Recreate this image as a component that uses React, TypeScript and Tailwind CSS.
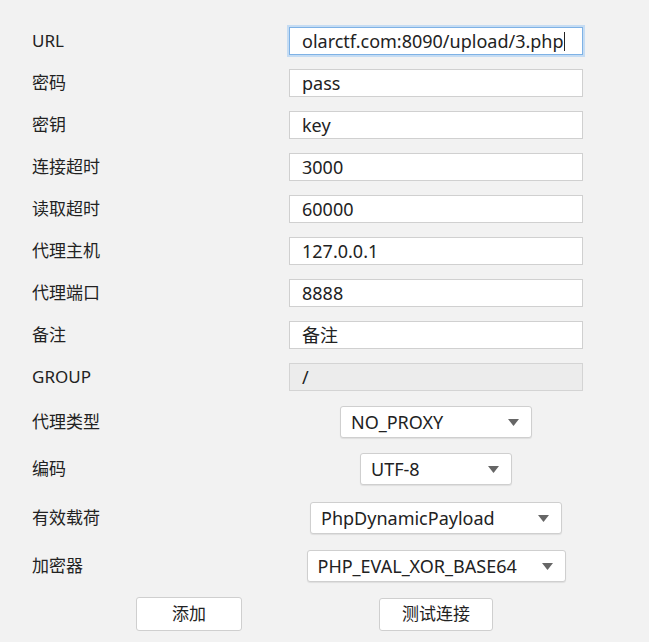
import React from "react";

const font = { fontFamily: '"Noto Sans", "Noto Sans CJK SC", sans-serif' };

const TextRow = ({ label, value, focused, disabled }: { label: string; value: string; focused?: boolean; disabled?: boolean }) => (
  <div className="flex items-center h-[28px]">
    <div className="w-[257px] text-[17px] text-[#222]">{label}</div>
    <div
      className={`w-[294px] h-[28px] flex items-center pl-[12px] text-[17px] text-[#222] border ${
        focused
          ? "border-[#7fb2e5] ring-2 ring-[#c5dcf3] bg-white"
          : disabled
          ? "border-[#d4d4d4] bg-[#ececec]"
          : "border-[#d0d0d0] bg-white"
      }`}
    >
      <span className="text-[18px]">{value}</span>
      {focused && <span className="w-px h-[19px] bg-[#222]" />}
    </div>
  </div>
);

const SelectRow = ({ label, value, width }: { label: string; value: string; width: string }) => (
  <div className="flex items-center h-[32px]">
    <div className="w-[257px] text-[17px] text-[#222]">{label}</div>
    <div className="w-[294px] flex justify-center">
      <div
        className={`${width} h-[32px] flex items-center justify-between pl-[10px] pr-[12px] bg-white border border-[#cfcfcf] rounded-[3px] shadow-[0_1px_1px_rgba(0,0,0,0.08)] text-[18px] text-[#222]`}
      >
        <span>{value}</span>
        <svg width="11" height="7" viewBox="0 0 11 7">
          <path d="M0 0 L11 0 L5.5 7 Z" fill="#666" />
        </svg>
      </div>
    </div>
  </div>
);

export default function App() {
  return (
    <div className="w-[649px] h-[642px] bg-[#f2f2f2] pl-[32px] pt-[27px]" style={font}>
      <div className="flex flex-col gap-[14px]">
        <TextRow label="URL" value="olarctf.com:8090/upload/3.php" focused />
        <TextRow label="密码" value="pass" />
        <TextRow label="密钥" value="key" />
        <TextRow label="连接超时" value="3000" />
        <TextRow label="读取超时" value="60000" />
        <TextRow label="代理主机" value="127.0.0.1" />
        <TextRow label="代理端口" value="8888" />
        <TextRow label="备注" value="备注" />
        <TextRow label="GROUP" value="/" disabled />
      </div>
      <div className="mt-[15px] flex flex-col">
        <SelectRow label="代理类型" value="NO_PROXY" width="w-[192px]" />
        <div className="mt-[15px]">
          <SelectRow label="编码" value="UTF-8" width="w-[152px]" />
        </div>
        <div className="mt-[17px]">
          <SelectRow label="有效载荷" value="PhpDynamicPayload" width="w-[252px]" />
        </div>
        <div className="mt-[16px]">
          <SelectRow label="加密器" value="PHP_EVAL_XOR_BASE64" width="w-[259px]" />
        </div>
      </div>
      <div className="flex items-center mt-[15px] h-[34px]">
        <button className="ml-[104px] w-[106px] h-[34px] bg-white border border-[#cfcfcf] rounded-[3px] text-[17px] text-[#222]">
          添加
        </button>
        <button className="ml-[137px] w-[114px] h-[33px] bg-white border border-[#cfcfcf] rounded-[3px] text-[17px] text-[#222]">
          测试连接
        </button>
      </div>
    </div>
  );
}
